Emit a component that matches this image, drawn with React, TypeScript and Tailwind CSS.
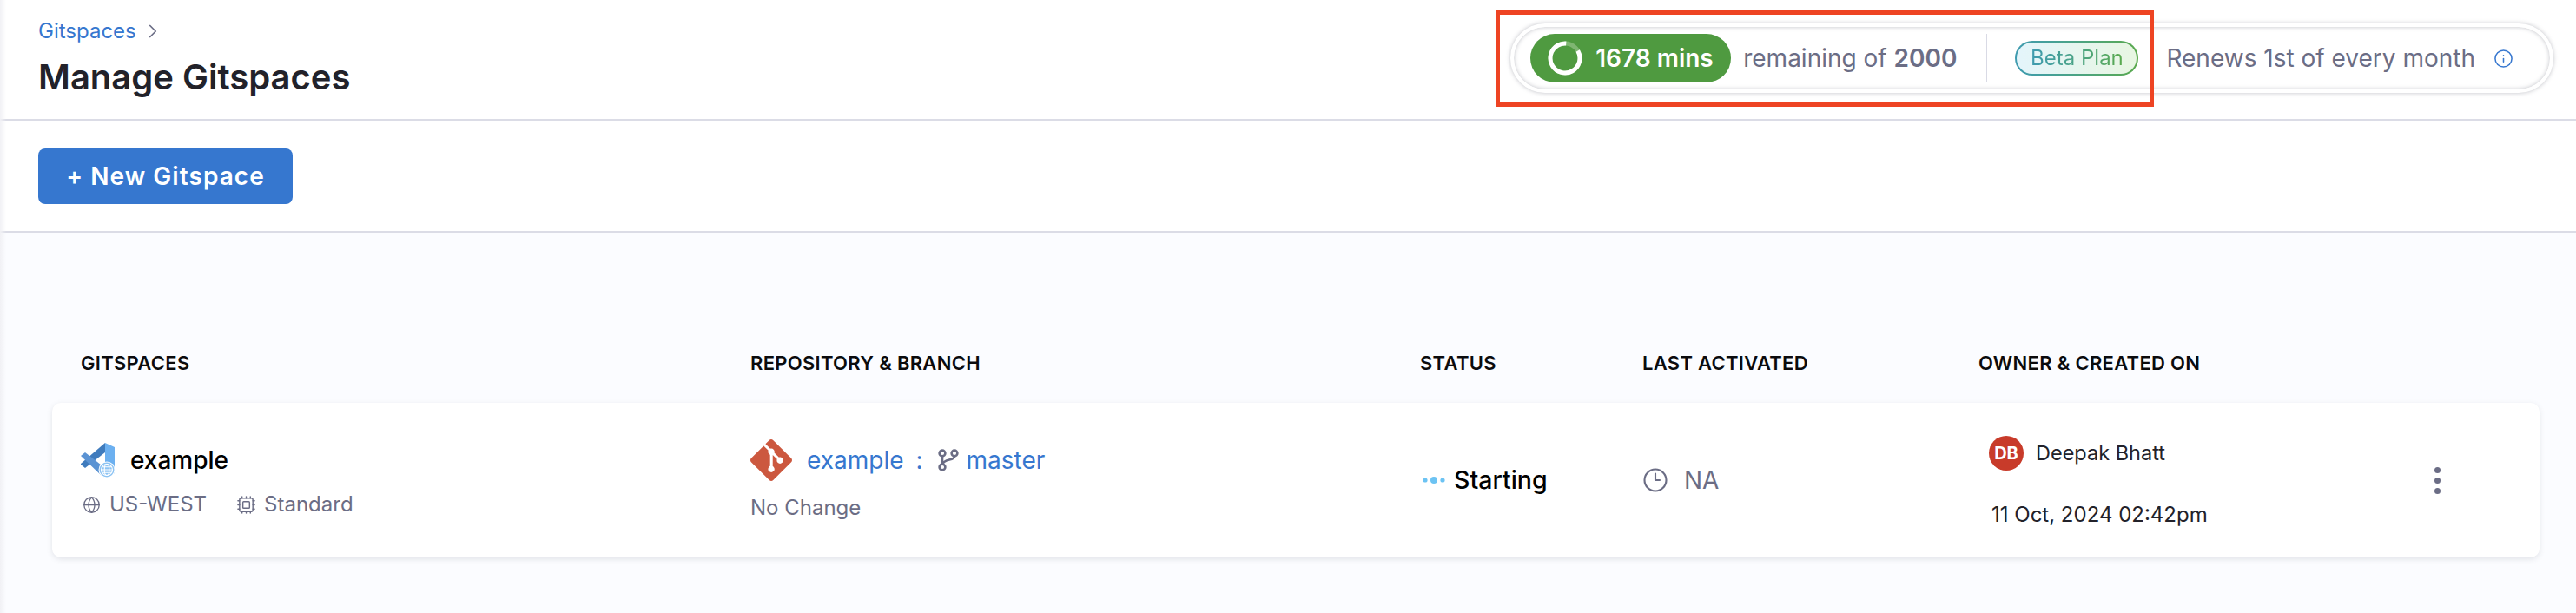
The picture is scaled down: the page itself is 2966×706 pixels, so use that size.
import { ChevronRight, Clock3, Cpu, Globe, Info } from "lucide-react";
import { SiGit } from "react-icons/si";

const VsCodeIcon = () => (
  <svg width="40" height="40" viewBox="0 0 40 40" className="shrink-0">
    <path d="M28 0 L39 5 V35 L28 40 Z" fill="#6cb0f0" />
    <path d="M28 0 V11 L5 29 L0 25 V24 Z" fill="#3f7bbd" />
    <path d="M0 15 L5 11 L28 29 V40 L24 38 Z" fill="#5b93d3" />
    <circle cx="30" cy="31" r="9.5" fill="#fff" />
    <circle cx="30" cy="31" r="8.5" fill="#8cc3f3" />
    <g fill="none" stroke="#fff" strokeWidth="1.1">
      <circle cx="30" cy="31" r="6.5" />
      <ellipse cx="30" cy="31" rx="2.8" ry="6.5" />
      <path d="M23.5 31 H36.5 M24.5 27.8 H35.5 M24.5 34.2 H35.5" />
    </g>
  </svg>
);

const ProgressRing = () => (
  <svg width="40" height="40" viewBox="0 0 40 40" className="shrink-0">
    <circle cx="20" cy="20" r="17" fill="none" stroke="#7fb672" strokeWidth="5" />
    <circle
      cx="20"
      cy="20"
      r="17"
      fill="none"
      stroke="#fff"
      strokeWidth="5"
      strokeDasharray="89.7 106.8"
      transform="rotate(-30 20 20)"
    />
  </svg>
);

const StatusDots = () => (
  <svg width="26" height="10" viewBox="0 0 26 10" className="shrink-0">
    <circle cx="3" cy="5" r="2.6" fill="#6cc3f3" />
    <circle cx="13" cy="5" r="4" fill="#6cc3f3" />
    <circle cx="23" cy="5" r="2.6" fill="#6cc3f3" />
  </svg>
);

const BranchIcon = () => (
  <svg width="24" height="26" viewBox="0 0 24 26" fill="none" stroke="#6b6d85" strokeWidth="2.6" className="ml-[17px] shrink-0">
    <circle cx="5" cy="5" r="3.4" />
    <circle cx="5" cy="21" r="3.4" />
    <circle cx="19" cy="5" r="3.4" />
    <path d="M5 8.4 V17.6 M19 8.4 C19 14 7 11 5.4 17.6" />
  </svg>
);

export default function App() {
  return (
    <div className="relative h-[706px] w-full overflow-hidden bg-[#fbfcff] font-['Inter',sans-serif]">
      {/* page edge shadow */}
      <div className="absolute left-0 top-0 h-full w-[7px] bg-linear-to-r from-[#f1f1f5] to-transparent" />

      {/* header */}
      <div className="flex h-[139px] items-center justify-between border-b-2 border-[#dbdce6] bg-white pl-[44px] pr-[26px]">
        <div className="mb-[3px] flex flex-col">
          <div className="flex h-[30px] items-center gap-[6px] text-[24px] text-[#3677cf]">
            <span>Gitspaces</span>
            <ChevronRight size={26} strokeWidth={1.6} className="text-[#6b6d85]" />
          </div>
          <h1 className="mt-[14px] text-[40px] leading-[48px] font-semibold text-[#22222a]">
            Manage Gitspaces
          </h1>
        </div>
        {/* quota pill */}
        <div className="mb-[3px] flex h-[80px] items-center rounded-full border-[4px] border-white bg-white pl-[19px] pr-[42px] shadow-[0_0_5px_rgba(96,97,112,0.4),inset_0_0_5px_rgba(96,97,112,0.4)]">
          <div className="flex h-[56px] w-[231px] items-center gap-[15px] rounded-full bg-[#4f9a40] pl-[20px] text-[28px] font-semibold text-white">
            <ProgressRing />
            <span>1678 mins</span>
          </div>
          <span className="ml-[14px] text-[28px] text-[#6b6d85]">
            remaining of <b className="font-semibold">2000</b>
          </span>
          <div className="ml-[34px] h-[56px] w-px bg-[#d9dae5]" />
          <div className="ml-[32px] rounded-full bg-linear-to-r from-[#3f9bb0] to-[#5aa94c] p-[2px]">
            <div className="flex h-[36px] w-[138px] items-center justify-center rounded-full bg-linear-to-r from-[#e4f5fb] to-[#e8f6e2]">
              <span className="bg-linear-to-r from-[#3f9bb0] to-[#5aa94c] bg-clip-text text-[24px] text-transparent">
                Beta Plan
              </span>
            </div>
          </div>
          <span className="ml-[32px] text-[28px] text-[#6b6d85]">Renews 1st of every month</span>
          <Info size={23} strokeWidth={1.6} className="ml-[21px] text-[#3677cf]" />
        </div>
      </div>

      {/* toolbar */}
      <div className="flex h-[129px] items-center border-b-2 border-[#dbdce6] bg-white pl-[44px]">
        <button className="flex h-[64px] w-[293px] items-center justify-center rounded-[8px] bg-[#3677cf] text-[28px] font-semibold tracking-[1.05px] text-white">
          + New Gitspace
        </button>
      </div>

      {/* table */}
      <div className="pl-[60px] pr-[42px]">
        <div className="grid h-[196px] grid-cols-[771px_771px_256px_387px_1fr] items-end pb-[32px] pl-[33px] text-[22px] leading-[28px] font-semibold tracking-[0.3px] text-[#0b0b0d]">
          <span>GITSPACES</span>
          <span>REPOSITORY &amp; BRANCH</span>
          <span>STATUS</span>
          <span>LAST ACTIVATED</span>
          <span>OWNER &amp; CREATED ON</span>
        </div>
        <div className="grid h-[178px] grid-cols-[771px_771px_256px_387px_1fr] items-center rounded-[10px] bg-white pl-[33px] shadow-[0_2px_6px_rgba(96,97,112,0.16)]">
          <div className="flex flex-col gap-[16px]">
            <div className="flex items-center gap-[17px] text-[28px] leading-[40px] font-medium text-black">
              <VsCodeIcon />
              <span>example</span>
            </div>
            <div className="flex items-center text-[24px] leading-[30px] text-[#6b6d85]">
              <Globe size={21} strokeWidth={1.5} className="ml-[2px]" />
              <span className="ml-[10px]">US-WEST</span>
              <Cpu size={23} strokeWidth={1.5} className="ml-[34px]" />
              <span className="ml-[9px]">Standard</span>
            </div>
          </div>

          <div className="flex flex-col gap-[16px]">
            <div className="flex items-center text-[28px] leading-[48px] text-[#3677cf]">
              <SiGit size={48} className="text-[#cc583f]" />
              <span className="ml-[17px]">example</span>
              <span className="ml-[14px]">:</span>
              <BranchIcon />
              <span className="ml-[9px]">master</span>
            </div>
            <span className="text-[24px] leading-[30px] text-[#6b6d85]">No Change</span>
          </div>

          <div className="flex items-center gap-[10px] pl-[3px] text-[28.5px] font-medium text-black">
            <StatusDots />
            <span>Starting</span>
          </div>

          <div className="flex items-center gap-[18px] text-[28px] text-[#6b6d85]">
            <Clock3 size={30} strokeWidth={1.7} />
            <span>NA</span>
          </div>

          <div className="flex items-center justify-between pr-[114px]">
            <div className="flex flex-col gap-[36px] pl-[12px] pt-[4px] text-[24px] leading-[30px] text-[#22222a]">
              <div className="flex items-center gap-[14px]">
                <div className="flex size-[40px] items-center justify-center rounded-full bg-[#c83b2a] text-[20px] font-bold text-white">
                  DB
                </div>
                <span className="text-[23.5px]">Deepak Bhatt</span>
              </div>
              <span className="ml-[3px]">11 Oct, 2024 02:42pm</span>
            </div>
            <div className="flex flex-col gap-[5px]">
              <div className="size-[7px] rounded-full bg-[#6b6d85]" />
              <div className="size-[7px] rounded-full bg-[#6b6d85]" />
              <div className="size-[7px] rounded-full bg-[#6b6d85]" />
            </div>
          </div>
        </div>
      </div>

      {/* red annotation box */}
      <div className="absolute left-[1722px] top-[12px] h-[111px] w-[758px] border-[5px] border-[#ee4423]" />
    </div>
  );
}
